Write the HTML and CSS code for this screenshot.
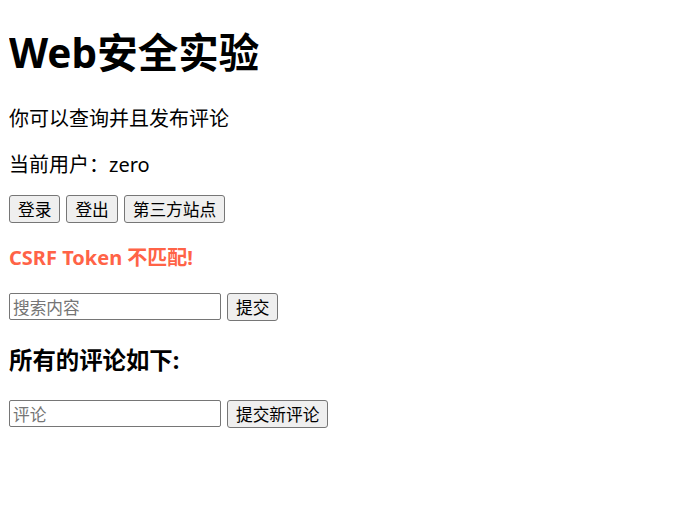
FILE: index.html
```html
<!DOCTYPE html>
<html lang="zh-CN">
<head>
<meta charset="utf-8">
<title>Web安全实验</title>
<link rel="stylesheet" href="styles.css">
</head>
<body class="page">
<h1 class="title">Web安全实验</h1>
<p class="text">你可以查询并且发布评论</p>
<p class="text text-last">当前用户：zero</p>
<div class="actions">
  <button class="btn" type="button">登录</button>
  <button class="btn" type="button">登出</button>
  <button class="btn" type="button">第三方站点</button>
</div>
<h4 class="error">CSRF Token 不匹配!</h4>
<form class="row">
  <input class="field" type="text" placeholder="搜索内容">
  <button class="btn" type="button">提交</button>
</form>
<h3 class="subtitle">所有的评论如下:</h3>
<form class="row">
  <input class="field" type="text" placeholder="评论">
  <button class="btn" type="button">提交新评论</button>
</form>
</body>
</html>
```

FILE: styles.css
```css
html, body {
  background: #ffffff;
}
.page {
  margin: 9px;
  font-family: "Noto Sans", "Noto Sans CJK SC", sans-serif;
  font-size: 20px;
  line-height: 26px;
  color: #000;
}
.title {
  font-size: 40.5px;
  line-height: 53px;
  font-weight: bold;
  margin: 17px 0 27px;
}
.text {
  margin: 20px 0;
}
.text-last {
  margin-bottom: 17px;
}
.actions {
  display: flex;
  gap: 6px;
  margin: 0;
}
.btn {
  font-family: "Noto Sans CJK SC", sans-serif;
  font-size: 16.7px;
  line-height: 22px;
  height: 28px;
  padding: 0 8px;
  margin: 0;
  background: #efefef;
  color: #000;
  border: 1px solid #767676;
  border-radius: 3px;
}
.error {
  color: #ff6347;
  font-size: 20px;
  line-height: 26px;
  font-weight: bold;
  margin: 22px 0;
}
.row {
  display: flex;
  align-items: flex-end;
  gap: 6px;
  margin: 0;
}
.field {
  box-sizing: border-box;
  width: 212px;
  height: 27px;
  margin: 0 0 1px;
  padding: 0 3px;
  font-family: "Noto Sans CJK SC", sans-serif;
  font-size: 16.7px;
  border: 1px solid #767676;
  border-radius: 2px;
}
.field::placeholder {
  color: #757575;
}
.subtitle {
  font-size: 23.4px;
  line-height: 31px;
  font-weight: bold;
  margin: 24px 0;
}
```
